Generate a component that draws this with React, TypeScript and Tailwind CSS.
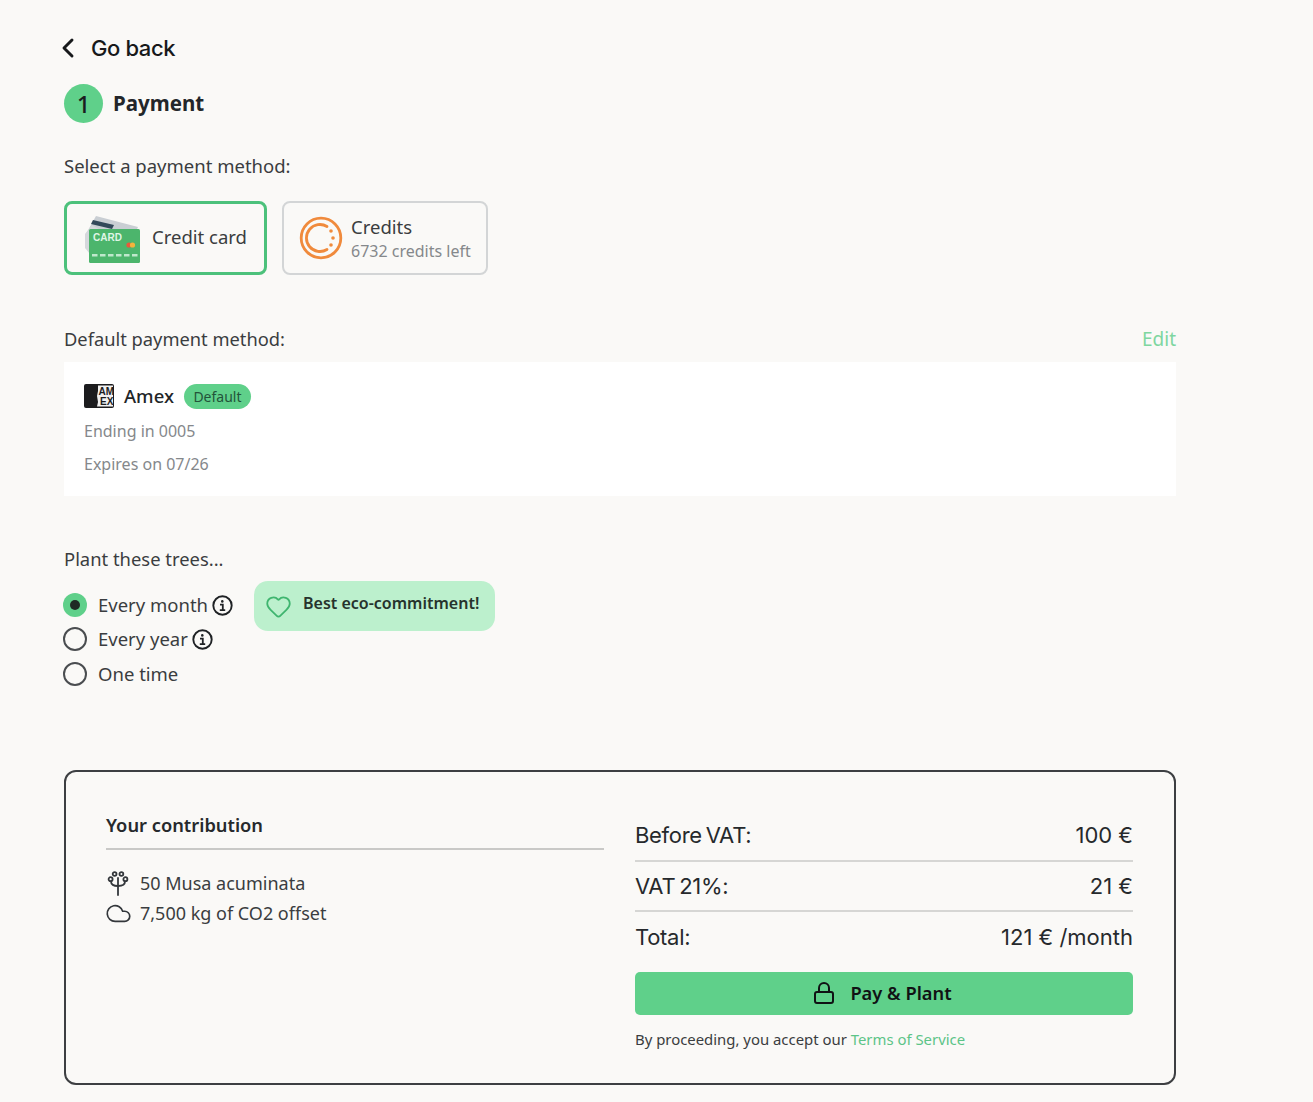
import React from 'react';
import { ChevronLeft, Cloud, Heart, Lock } from 'lucide-react';

const heading = { fontFamily: 'Inter, "Liberation Sans", sans-serif' };

const CardIcon = () => (
  <svg width="56" height="50" viewBox="0 0 56 50" className="shrink-0 mt-[3px]">
    <path d="M12 2 L54 13 L46 30 L2 20 Z" fill="#c9ced3" />
    <path d="M9 6 L30 11 L28 15 L7 10 Z" fill="#33495a" />
    <path d="M1 20 L8 11 L20 18 L6 40 L1 34 Z" fill="#d5d8dc" />
    <rect x="5" y="15" width="51" height="34" rx="1.5" fill="#4cb56c" />
    <text x="9" y="27" fontSize="10" fontWeight="700" fill="#dff5e5" fontFamily="Liberation Sans, sans-serif">CARD</text>
    <circle cx="45" cy="31" r="2.6" fill="#e8593b" />
    <circle cx="48.5" cy="31" r="2.6" fill="#f2b43c" />
    {[8, 16, 24, 32, 40, 48].map((x) => (
      <rect key={x} x={x} y="40" width="5.5" height="2.5" fill="#bfe8cc" />
    ))}
  </svg>
);

const CreditsIcon = () => (
  <svg width="44" height="44" viewBox="0 0 44 44" fill="none" stroke="#f08a3c" className="shrink-0">
    <circle cx="22" cy="22" r="19.8" strokeWidth="2.8" />
    <path d="M28 10.5 A13.5 13.5 0 1 0 28 33.5" strokeWidth="2.8" strokeLinecap="round" />
    <circle cx="32" cy="15" r="1.8" fill="#f08a3c" stroke="none" />
    <circle cx="34" cy="22" r="1.8" fill="#f08a3c" stroke="none" />
    <circle cx="32" cy="29" r="1.8" fill="#f08a3c" stroke="none" />
  </svg>
);

const AmexIcon = () => (
  <svg width="30" height="24" viewBox="0 0 30 24" className="shrink-0">
    <rect width="30" height="24" rx="2" fill="#1c1c1e" />
    <path d="M14 1.5 H29 V22.5 H13 L14 18 L13 12 L14 7 Z" fill="#f1f1f1" />
    <text x="14.5" y="10.5" fontSize="10" fontWeight="700" fill="#1c1c1e" fontFamily="Liberation Sans, sans-serif">AM</text>
    <text x="16" y="20.5" fontSize="10" fontWeight="700" fill="#1c1c1e" fontFamily="Liberation Sans, sans-serif">EX</text>
  </svg>
);

const PlantIcon = () => (
  <svg width="22" height="25" viewBox="0 0 22 25" fill="none" stroke="#33373b" strokeWidth="1.8" strokeLinecap="round">
    <path d="M11 7 V24" />
    <path d="M11 15 C6.5 15 4 13.5 4 10.5" />
    <path d="M11 15 C15.5 15 18 13.5 18 10.5" />
    <circle cx="3.6" cy="8.2" r="2" />
    <circle cx="18.4" cy="8.2" r="2" />
    <circle cx="7.6" cy="3" r="1.9" />
    <circle cx="14.4" cy="3" r="1.9" />
  </svg>
);

const InfoIcon = () => (
  <svg width="21" height="21" viewBox="0 0 21 21" fill="none" stroke="#1f2225" className="shrink-0 ml-[4px]">
    <circle cx="10.5" cy="10.5" r="9.2" strokeWidth="1.9" />
    <circle cx="10.3" cy="6.4" r="1.3" fill="#1f2225" stroke="none" />
    <path d="M8 9.6 H10.8 V15 M7.8 15.2 H13.2" strokeWidth="1.8" />
  </svg>
);

const Radio = ({ checked = false }: { checked?: boolean }) =>
  checked ? (
    <span className="w-6 h-6 rounded-full bg-[#5fd08a] flex items-center justify-center shrink-0">
      <span className="w-[10px] h-[10px] rounded-full bg-[#1f2a24]" />
    </span>
  ) : (
    <span className="w-6 h-6 rounded-full border-2 border-[#4a4d50] shrink-0" />
  );

const PriceRow = ({ label, value, line = true }: { label: string; value: string; line?: boolean }) => (
  <div
    className={`flex items-center justify-between h-[50.5px] pt-[1px] text-[22px] text-[#26292c] ${line ? 'border-b-2 border-[#d6d6d4]' : ''}`}
    style={heading}
  >
    <span className="tracking-[-0.3px] [word-spacing:-2px]">{label}</span>
    <span>{value}</span>
  </div>
);

export default function App() {
  return (
    <div
      className="min-h-[1102px] bg-[#faf9f7] pl-[64px] pt-[32px] text-[#3a3d40]"
      style={{ fontFamily: '"Noto Sans", "Liberation Sans", sans-serif' }}
    >
      <div className="w-[1112px]">
        {/* Header */}
        <div className="flex items-center h-[32px] -ml-[12px] text-[#17191b]" style={heading}>
          <ChevronLeft size={32} strokeWidth={2.2} />
          <span className="ml-[7px] text-[22px] font-medium tracking-[-0.4px]">Go back</span>
        </div>
        <div className="flex items-center gap-[10px] mt-[20px]">
          <div className="w-[39px] h-[39px] rounded-full bg-[#5fd08a] flex items-center justify-center text-[24px] font-medium text-[#1b1d1f]">
            1
          </div>
          <span className="text-[20.5px] font-bold text-[#23262a]">Payment</span>
        </div>

        {/* Payment method */}
        <p className="mt-[27px] text-[18.5px] leading-[32px]">Select a payment method:</p>
        <div className="flex gap-[15px] mt-[19px]">
          <div className="w-[203px] h-[74px] rounded-[8px] border-[3px] border-[#4cc17b] flex items-center pl-[17px] gap-[12px] pb-[2px]">
            <CardIcon />
            <span className="text-[18.5px] whitespace-nowrap">Credit card</span>
          </div>
          <div className="w-[206px] h-[74px] rounded-[8px] border-2 border-[#d3d5d6] flex items-center pl-[15px] gap-[8px]">
            <CreditsIcon />
            <div className="pt-[2px]">
              <div className="text-[18.5px] leading-[24px]">Credits</div>
              <div className="text-[16px] leading-[24px] text-[#85888b]">6732 credits left</div>
            </div>
          </div>
        </div>

        {/* Default method */}
        <div className="flex items-center justify-between mt-[48px] h-[32px] text-[18.3px]">
          <span>Default payment method:</span>
          <span className="text-[19px] text-[#7ed6a0]">Edit</span>
        </div>
        <div className="mt-[7px] h-[134px] bg-white pl-[20px] pt-[21px]">
          <div className="flex items-center h-[26px]">
            <AmexIcon />
            <span className="ml-[10px] text-[18.5px] font-medium text-[#222528]">Amex</span>
            <span className="ml-[10px] w-[67px] h-[25px] rounded-full bg-[#5fd08a] flex items-center justify-center text-[14px] text-[#23543a]">
              Default
            </span>
          </div>
          <p className="mt-[10px] h-[33px] leading-[24px] text-[16px] text-[#85888b]">Ending in 0005</p>
          <p className="leading-[24px] text-[16px] text-[#85888b]">Expires on 07/26</p>
        </div>

        {/* Frequency */}
        <p className="mt-[47px] text-[18.4px] leading-[32px]">Plant these trees...</p>
        <div className="flex mt-[6px] -ml-px">
          <div className="mt-[7px] w-[191px] text-[18.5px]">
            <div className="flex items-center h-[34px]">
              <Radio checked />
              <span className="ml-[11px]">Every month</span>
              <InfoIcon />
            </div>
            <div className="flex items-center h-[34px]">
              <Radio />
              <span className="ml-[11px]">Every year</span>
              <InfoIcon />
            </div>
            <div className="flex items-center h-[35px]">
              <Radio />
              <span className="ml-[11px]">One time</span>
            </div>
          </div>
          <div className="w-[241px] h-[50px] rounded-[14px] bg-[#bcf0cd] flex items-start pl-[11px] pt-[10px] gap-[11px]">
            <Heart size={27} strokeWidth={1.6} className="text-[#3fb56f] mt-[2px]" />
            <span className="text-[16px] font-semibold text-[#26332c] leading-[24px] whitespace-nowrap">
              Best eco-commitment!
            </span>
          </div>
        </div>

        {/* Contribution */}
        <div className="mt-[79px] h-[315px] rounded-[12px] border-2 border-[#3d3f42] flex pl-[40px] pr-[41px] pt-[33px] gap-[31px]">
          <div className="w-[498px]">
            <div className="h-[45px] border-b-2 border-[#c9c9c7] text-[18.3px] font-semibold text-[#26292c] leading-[40px]">
              Your contribution
            </div>
            <div className="mt-[18px] flex items-center h-[30px] text-[18px]">
              <span className="w-[24px] flex justify-center"><PlantIcon /></span>
              <span className="ml-[10px]">50 Musa acuminata</span>
            </div>
            <div className="flex items-center h-[30px] text-[18px]">
              <Cloud size={27} strokeWidth={1.5} className="text-[#33373b] -ml-[1px]" />
              <span className="ml-[8px]">7,500 kg of CO2 offset</span>
            </div>
          </div>
          <div className="w-[498px] pt-[6px]">
            <PriceRow label="Before VAT:" value="100 €" />
            <PriceRow label="VAT 21%:" value="21 €" />
            <PriceRow label="Total:" value="121 € /month" line={false} />
            <button
              type="button"
              className="w-full h-[43px] mt-[9px] rounded-[5px] bg-[#5fd08a] flex items-center justify-center gap-[14px] pr-[4px] text-[18.3px] font-semibold text-[#101214]"
            >
              <Lock size={24} strokeWidth={2} />
              Pay &amp; Plant
            </button>
            <p className="mt-[12px] text-[14.9px] leading-[24px]">
              By proceeding, you accept our <span className="text-[#5cc488]">Terms of Service</span>
            </p>
          </div>
        </div>
      </div>
    </div>
  );
}
